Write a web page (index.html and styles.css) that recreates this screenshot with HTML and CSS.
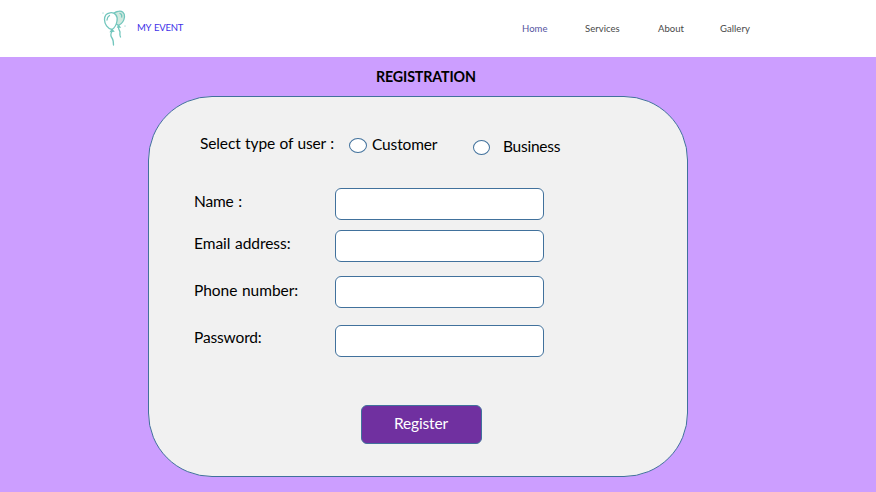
FILE: index.html
```html
<!DOCTYPE html>
<html lang="en">
<head>
<meta charset="utf-8">
<title>My Event - Registration</title>
<link rel="stylesheet" href="styles.css">
</head>
<body>
<header class="topbar">
  <svg class="logo" width="30" height="38" viewBox="0 0 30 38" fill="none" stroke="#72c6bd" stroke-width="1.3" stroke-linecap="round">
    <path d="M19.500 3.500C24 2 27 5 26.500 9C26 13 23.500 16 20.500 17.500C16 15 14.500 12 15 8C15.300 5 17 4 19.500 3.500Z" fill="#d0e9df"/>
    <path d="M20.500 17.500l-.7 1.500h2l-1.300-1.500M20.700 19c-.7 3 1.500 3.500 1.300 5.500s-.5 2.500.5 4.500"/>
    <path d="M12 4.800C17 4 20 8 19 13C18.300 17 16.500 20 14 21.500C9.500 20.500 6.500 16 6.500 11.500C6.500 7.500 8.500 5.300 12 4.800Z" fill="#fff"/>
    <path d="M14 21.500l-1.300 2 2.800-.3-1.500-1.700M14 23.500c-2 3-1.500 4.500 0 6.500s1.500 4 1.500 7M9 12c0-2 1-3.500 2.500-4.500M22 5.500c1.500.5 2 2 1.700 3.500"/>
    <path stroke-width="1" d="M5 5v.1M27 18v.1"/>
  </svg>
  <span class="brand">MY EVENT</span>
  <nav class="nav">
    <a class="active">Home</a><a class="services">Services</a><a class="about">About</a><a class="gallery">Gallery</a>
  </nav>
</header>
<main>
  <h1><span>REGISTRATION</span></h1>
  <form class="card">
    <div class="types">
      <span class="text select">Select type of user :</span>
      <i class="radio"></i><span class="text customer">Customer</span>
      <i class="radio small"></i><span class="text business">Business</span>
    </div>
    <div class="field name"><label class="text">Name :</label><i class="input"></i></div>
    <div class="field email"><label class="text">Email address:</label><i class="input"></i></div>
    <div class="field phone"><label class="text">Phone number:</label><i class="input"></i></div>
    <div class="field password"><label class="text">Password:</label><i class="input"></i></div>
    <div class="button"><span class="text">Register</span></div>
  </form>
</main>
</body>
</html>
```

FILE: styles.css
```css
* { box-sizing: border-box; }
body { margin: 0; height: 492px; overflow: hidden; background: #cc9eff; color: #000; font-family: Lato, sans-serif; }
.topbar { height: 57px; background: #fff; display: flex; align-items: flex-start; }
.logo { flex: none; margin: 8px 0 0 98px; }
.brand { width: 385px; margin: 21px 0 0 9px; font: 9.5px/13px Lato, sans-serif; letter-spacing: -.25px; word-spacing: 1px; color: #4030e8; white-space: nowrap; }
.nav { display: flex; margin-top: 22px; font: 9.5px/13px Lato, sans-serif; letter-spacing: .05px; color: #484848; }
.nav a { width: 73px; }
.nav .active { width: 63px; color: #5654a0; }
.nav .about { width: 62px; }
h1 { margin: 0; height: 39px; padding: 9px 0 0 376px; font-size: 15.500px; line-height: 20px; white-space: nowrap; letter-spacing: -.15px; }
h1 span { display: inline-block; transform: scaleX(.92); transform-origin: left; }
.card { width: 540px; height: 381px; margin-left: 148px; border: 1px solid #41719c; border-radius: 64px; background: #f1f1f1; }
.text { font-size: 15.500px; line-height: 20px; letter-spacing: -.15px; white-space: nowrap; }
.types { height: 91px; padding: 36px 0 0 51px; display: flex; align-items: flex-start; }
.select { width: 149px; letter-spacing: -.12px; word-spacing: .6px; }
.radio { width: 18px; height: 15px; margin-top: 5px; border: 1px solid #41719c; border-radius: 50%; background: #fff; }
.customer { width: 101px; margin: 1px 0 0 5px; }
.small { width: 17px; margin-top: 7px; }
.business { margin: 3px 0 0 13px; letter-spacing: -.25px; }
.field { display: flex; height: 32px; padding-left: 45px; }
.field .text { width: 141px; margin-top: 3px; word-spacing: .8px; }
.input { width: 209px; height: 32px; border: 1px solid #41719c; border-radius: 6px; background: #fff; }
.email { margin-top: 10px; }
.email .text, .phone .text { letter-spacing: -.05px; }
.phone { margin-top: 14px; }
.phone .text { margin-top: 4px; }
.password { margin-top: 17px; }
.password .text { margin-top: 2px; }
.button { display: flex; justify-content: center; width: 121px; height: 39px; margin: 48px 0 0 212px; padding: 7px 1px 0 0; border: 1px solid #41719c; border-radius: 6px; background: #7030a0; color: #fff; }
```
